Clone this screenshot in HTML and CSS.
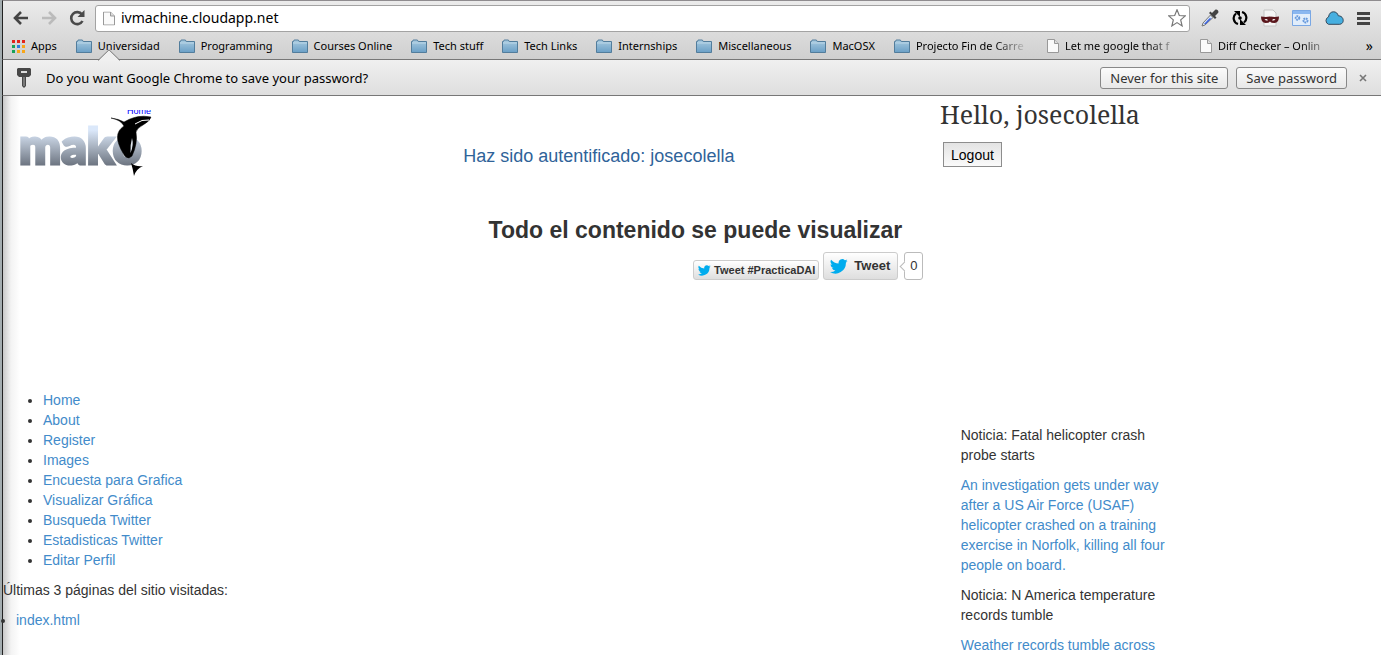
FILE: index.html
```html
<!DOCTYPE html>
<html lang="es">
<head>
<meta charset="utf-8">
<title>ivmachine.cloudapp.net</title>
<link rel="stylesheet" href="styles.css">
</head>
<body>
<svg class="defs" aria-hidden="true">
  <defs>
    <linearGradient id="folderFill" x1="0" y1="0" x2="0" y2="1"><stop offset="0" stop-color="#a9cbe0"/><stop offset="1" stop-color="#6a9fc6"/></linearGradient>
    <linearGradient id="makoFill" x1="0" y1="20" x2="0" y2="56" gradientUnits="userSpaceOnUse"><stop offset="0" stop-color="#dbe8fa"/><stop offset="0.45" stop-color="#aab4c2"/><stop offset="1" stop-color="#6b737f"/></linearGradient>
    <symbol id="folder" viewBox="0 0 16 15"><path d="M.5 13.500V2.500h1l.6-1.500h4.300l.8 1.500h8.300v11z" fill="url(#folderFill)" stroke="#527d9c"/><path d="M1 4h14" stroke="#c4dceb" stroke-width=".8"/></symbol>
    <symbol id="page" viewBox="0 0 12 14"><path d="M.5.500h7l4 4v9H.5z" fill="#fafafa" stroke="#999"/><path d="M7.500.500v4h4" fill="#ddd" stroke="#999"/></symbol>
    <symbol id="bird" viewBox="0 0 24 20"><path d="M23.600 2.400a9.700 9.700 0 0 1-2.800.8A4.900 4.900 0 0 0 22.900.500a9.700 9.700 0 0 1-3.100 1.200 4.900 4.900 0 0 0-8.300 4.400A13.800 13.800 0 0 1 1.500 1a4.900 4.900 0 0 0 1.500 6.500 4.900 4.900 0 0 1-2.200-.6 4.900 4.900 0 0 0 3.900 4.800 4.900 4.900 0 0 1-2.200.1 4.900 4.900 0 0 0 4.600 3.400A9.800 9.800 0 0 1 0 17.300 13.900 13.900 0 0 0 21.200 5z" fill="#00acee"/></symbol>
  </defs>
</svg>
<div class="window">
  <header class="chrome">
    <div class="toolbar">
      <button class="nav-btn" aria-label="Back"><svg width="16" height="14" viewBox="0 0 16 14"><path d="M15 7H2M8 1L2 7l6 6" fill="none" stroke="#444" stroke-width="2.600"/></svg></button>
      <button class="nav-btn" aria-label="Forward"><svg width="16" height="14" viewBox="0 0 16 14"><path d="M1 7h13M8 1l6 6-6 6" fill="none" stroke="#bbb" stroke-width="2.600"/></svg></button>
      <button class="nav-btn reload" aria-label="Reload"><svg width="16" height="16" viewBox="0 0 16 16"><path d="M13 4.500A6 6 0 1 0 13.500 11" fill="none" stroke="#4a4a4a" stroke-width="2.600"/><path d="M15.500 0v7H8.500z" fill="#4a4a4a"/></svg></button>
      <div class="omnibox">
        <svg width="12" height="15" viewBox="0 0 12 14"><use href="#page"/></svg>
        <input class="url" type="text" aria-label="Address" value="ivmachine.cloudapp.net">
        <svg width="18" height="18" viewBox="0 0 18 18"><path d="M9 .8l2.300 5.700 6 .4-4.600 4 1.400 6L9 13.600l-5.100 3.300 1.400-6L.7 6.900l6-.4z" fill="#fff" stroke="#777" stroke-width="1.200"/></svg>
      </div>
      <div class="extensions">
        <svg width="18" height="18" viewBox="0 0 18 18"><path d="M1 17l1-3 7.500-8 2.500 2.500L4 16z" fill="#d6e2f5" stroke="#777"/><path d="M3 15l5.500-5.700 2 .3L5 15z" fill="#3c62e0"/><path d="M8 4l6 6 1.500-1.500-1.500-1.500 3-3c1.500-1.500-1-4.500-3-3l-3 3-1.500-1.500z" fill="#444"/></svg>
        <svg width="16" height="16" viewBox="0 0 16 16"><path d="M6 14A6 6 0 0 1 4 3.500M10 2a6 6 0 0 1 2 10.500" fill="none" stroke="#000" stroke-width="2.200"/><path d="M2 1h6v6zM14 15H8V9z"/><circle cx="8" cy="8" r="1.800"/></svg>
        <svg width="18" height="18" viewBox="0 0 18 18"><path d="M3 1h9l3 3v13H3z" fill="#f5f5f5" stroke="#c5c5c5"/><path d="M0 7.500q5 .8 9 0 5 .8 9 0 0 6.500-4.500 6.500Q10 14 9 12.500 8 14 4.500 14 0 14 0 7.500z" fill="#5a161c"/><path d="M3.500 10.500q2-1.500 3.500.7-2 .8-3.500-.7zm11 0q-2-1.500-3.500.7 2 .8 3.500-.7z" fill="#fff"/></svg>
        <svg width="19" height="16" viewBox="0 0 19 16"><path d="M.5.500h18v15H.5z" fill="#e1edfb" stroke="#79a7e4"/><path d="M1 1h17v3H1z" fill="#8ab7f0"/><g fill="none" stroke="#6699dc" stroke-width="2" stroke-dasharray="1.600 .6"><circle cx="5.500" cy="8" r="1.800"/><circle cx="13.500" cy="10.500" r="2"/></g></svg>
        <svg width="20" height="14" viewBox="0 0 20 14"><path d="M4.500 13.300a3.900 3.900 0 0 1 0-7.300C5 2.500 7 .8 9.500.8c2.500 0 4.200 1.600 4.800 4 6 0 6.500 8 1.500 8.500z" fill="#46afe0" stroke="#34485a"/></svg>
        <svg width="14" height="14" viewBox="0 0 14 14"><path d="M0 2.500h13M0 7.500h13M0 12.500h13" stroke="#444" stroke-width="3"/></svg>
      </div>
    </div>
    <nav class="bookmarks" aria-label="Bookmarks">
      <a href="#" class="bm"><svg width="13" height="13" viewBox="0 0 13 13"><g fill="#e2231a"><path d="M0 0h3v3H0zM5 0h3v3H5zM10 0h3v3h-3z"/></g><path d="M0 5h3v3H0zM0 10h3v3H0z" fill="#17a258"/><path d="M5 5h3v3H5z" fill="#2a7de1"/><path d="M10 5h3v3h-3zM5 10h3v3H5zM10 10h3v3h-3z" fill="#f8a617"/></svg>Apps</a>
      <a href="#" class="bm"><svg width="16" height="15"><use href="#folder"/></svg>Universidad</a>
      <a href="#" class="bm"><svg width="16" height="15"><use href="#folder"/></svg>Programming</a>
      <a href="#" class="bm"><svg width="16" height="15"><use href="#folder"/></svg>Courses Online</a>
      <a href="#" class="bm"><svg width="16" height="15"><use href="#folder"/></svg>Tech stuff</a>
      <a href="#" class="bm"><svg width="16" height="15"><use href="#folder"/></svg>Tech Links</a>
      <a href="#" class="bm"><svg width="16" height="15"><use href="#folder"/></svg>Internships</a>
      <a href="#" class="bm"><svg width="16" height="15"><use href="#folder"/></svg>Miscellaneous</a>
      <a href="#" class="bm"><svg width="16" height="15"><use href="#folder"/></svg>MacOSX</a>
      <a href="#" class="bm long"><svg width="16" height="15"><use href="#folder"/></svg>Projecto Fin de Carre</a>
      <a href="#" class="bm long"><svg width="12" height="14"><use href="#page"/></svg>Let me google that f</a>
      <a href="#" class="bm long"><svg width="12" height="14"><use href="#page"/></svg>Diff Checker – Onlin</a>
      <button class="more" aria-label="More bookmarks">»</button>
    </nav>
  </header>
  <div class="infobar">
    <svg class="notch" width="22" height="12" viewBox="0 0 22 12"><path d="M0 12L11 1l11 11z" fill="#f0f0f0"/><path d="M0 11.500L11 .8l11 10.700" fill="none" stroke="#777"/></svg>
    <svg width="14" height="20" viewBox="0 0 14 20"><path d="M1 0h12l1 1v6l-2 2H9v9l-2 2-2-2V9H2L0 7V1z" fill="#484848"/><path d="M4 3h6v2H4z" fill="#ddd"/><path d="M7 9v9" stroke="#aaa"/></svg>
    <p class="question">Do you want Google Chrome to save your password?</p>
    <button class="info-btn">Never for this site</button>
    <button class="info-btn">Save password</button>
    <button class="close" aria-label="Close"><svg width="8" height="8" viewBox="0 0 8 8"><path d="M1 1l6 6M7 1L1 7" stroke="#777" stroke-width="1.600"/></svg></button>
  </div>
  <main class="page">
    <section class="top">
      <a class="logo" href="#" aria-label="Mako">
        <svg width="140" height="72" viewBox="0 0 140 72">
          <svg x="106" y="0" width="30" height="5"><text x="1" y="4" class="logo-home">Home</text></svg>
          <text x="-1" y="54" class="logo-word">mako</text>
          <path d="M91 8q8 1 13 4 13-8 27-5-1 4-8 8-6 3-7 7 2 11-4 24l-3 2q-4 0-6-5c-7-12-8-21 1-27q-3-6-13-8z" stroke="#000" stroke-width=".5"/><path d="M110.500 43q-.5-8 1.500-15 2 7-1.500 15z" fill="#dfe6ee"/><path d="M115 14q7-5 14-4" fill="none" stroke="#fff" stroke-width="1"/><path d="M111 53q5 4 12 3-7 3-9 10-1-7-3-13z"/>
        </svg>
      </a>
      <p class="auth">Haz sido autentificado: josecolella</p>
      <div class="user">
        <h1 class="hello">Hello, josecolella</h1>
        <button class="logout">Logout</button>
      </div>
    </section>
    <section class="hero">
      <h2 class="title">Todo el contenido se puede visualizar</h2>
      <div class="tweets">
        <a class="tweet small" href="#"><svg width="13" height="11"><use href="#bird"/></svg>Tweet #PracticaDAI</a>
        <a class="tweet large" href="#"><svg width="18" height="15"><use href="#bird"/></svg>Tweet</a>
        <a class="count" href="#">0</a>
      </div>
    </section>
    <section class="columns">
      <div class="side">
        <ul class="menu">
          <li><a href="#">Home</a></li>
          <li><a href="#">About</a></li>
          <li><a href="#">Register</a></li>
          <li><a href="#">Images</a></li>
          <li><a href="#">Encuesta para Grafica</a></li>
          <li><a href="#">Visualizar Gráfica</a></li>
          <li><a href="#">Busqueda Twitter</a></li>
          <li><a href="#">Estadisticas Twitter</a></li>
          <li><a href="#">Editar Perfil</a></li>
        </ul>
        <p>Últimas 3 páginas del sitio visitadas:</p>
        <ul class="visited"><li><a href="#">index.html</a></li></ul>
      </div>
      <aside class="news">
        <p>Noticia: Fatal helicopter crash probe starts</p>
        <p><a href="#">An investigation gets under way after a US Air Force (USAF) helicopter crashed on a training exercise in Norfolk, killing all four people on board.</a></p>
        <p>Noticia: N America temperature records tumble</p>
        <p><a href="#">Weather records tumble across</a></p>
      </aside>
    </section>
  </main>
</div>
</body>
</html>
```
FILE: styles.css
```css
* { box-sizing: border-box; }
body {
  margin: 0;
  height: 100vh;
  overflow: hidden;
  background: #fff;
  color: #333;
  font: 14px/20px "Liberation Sans", Arial, sans-serif;
}
.defs { position: absolute; width: 0; height: 0; }
a { color: #428bca; text-decoration: none; }
p { margin: 0 0 10px; }
button { font: inherit; padding: 0; border: 0; background: none; color: inherit; }
svg { display: block; flex: none; }

.window {
  min-height: 100vh;
  border-left: 2px solid #a4adb0;
}
.chrome, .infobar, .page { border-left: 1px solid #222; }

.chrome {
  height: 60px;
  border-top: 1px solid #8f8c8f;
  border-bottom: 1px solid #777;
  background: linear-gradient(#ebebeb, #cfcfcf);
  font: 11px/16px "Noto Sans", sans-serif;
  color: #000;
}
.toolbar { display: flex; align-items: center; height: 34px; padding: 0 10px; }
.nav-btn { width: 28px; display: flex; }
.reload { width: 26px; }
.omnibox {
  flex: 1;
  display: flex;
  align-items: center;
  height: 27px;
  padding: 0 3px 0 7px;
  border: 1px solid #a3a3a3;
  border-radius: 3px;
  background: #fff;
}
.url {
  flex: 1;
  min-width: 0;
  padding: 0 0 0 6px;
  border: 0;
  outline: 0;
  background: none;
  font: 14px/20px "Noto Sans", sans-serif;
  color: #000;
}
.extensions { display: flex; align-items: center; gap: 13px; padding-left: 11px; }

.bookmarks { display: flex; align-items: center; height: 22px; padding: 0 8px 0 9px; }
.bm {
  display: flex;
  align-items: center;
  gap: 6px;
  margin-right: 19px;
  color: #000;
  white-space: nowrap;
}
.long {
  width: 134px;
  -webkit-mask-image: linear-gradient(90deg, #000 75%, transparent);
  mask-image: linear-gradient(90deg, #000 75%, transparent);
}
.more { margin-left: auto; font-size: 14px; }

.infobar {
  position: relative;
  display: flex;
  align-items: center;
  height: 36px;
  padding: 0 14px;
  border-bottom: 1px solid #777;
  background: linear-gradient(#f0f0f0, #dedede);
  font: 13px/18px "Noto Sans", sans-serif;
  color: #000;
}
.notch { position: absolute; left: 95px; top: -11px; }
.question { flex: 1; margin: 0 0 0 15px; }
.info-btn {
  height: 22px;
  margin-left: 8px;
  padding: 0 9px;
  border: 1px solid #888;
  border-radius: 3px;
  background: linear-gradient(#fbfbfb, #e8e8e8);
  color: #333;
}
.close { margin-left: 12px; }

.page { background: linear-gradient(90deg, #c9c9c9, #f3f3f3 8px, #fff 17px); min-height: calc(100vh - 96px); }
.top { display: flex; height: 106px; }
.logo { width: 33.400%; padding: 14px 0 0 17px; }
.logo-home { font: 9px "Liberation Sans", sans-serif; fill: #00f; }
.logo-word { font: 900 50px Lato, sans-serif; fill: url(#makoFill); stroke: url(#makoFill); stroke-width: 3px; }
.auth { width: 34.600%; margin: 0; padding-top: 50px; font-size: 18px; color: #2f6399; }
.hello {
  margin: 0;
  font: 25px/36px "Noto Serif", "Liberation Serif", serif;
}
.logout {
  display: block;
  height: 25px;
  margin: 10px 0 0 3px;
  padding: 0 7px;
  border: 1px solid #8d8d8d;
  background: linear-gradient(#e3e3e3, #fafafa);
  color: #000;
}
.hero { width: 67%; padding: 15px 3px 0 0; }
.title { margin: 0; text-align: right; padding-right: 21px; font: bold 23px/26px "Liberation Sans", sans-serif; }
.tweets { display: flex; justify-content: flex-end; align-items: flex-end; gap: 4px; margin-top: 9px; }
.tweet {
  display: flex;
  align-items: center;
  border: 1px solid #ccc;
  border-radius: 3px;
  background: linear-gradient(#fff, #dedede);
  color: #333;
  font-weight: bold;
}
.small { height: 20px; gap: 3px; padding: 0 3px 0 4px; font-size: 11px; }
.large { height: 28px; gap: 6px; padding: 0 7px 0 6px; font-size: 13px; }
.count {
  position: relative;
  width: 19px;
  height: 28px;
  margin-left: 2px;
  border: 1px solid #bbb;
  border-radius: 3px;
  background: #fff;
  color: #333;
  text-align: center;
  font-size: 13px;
  line-height: 26px;
}
.count::before {
  content: "";
  position: absolute;
  left: -4px;
  top: 10px;
  width: 6px;
  height: 6px;
  border: solid #bbb;
  border-width: 0 0 1px 1px;
  background: #fff;
  transform: rotate(45deg);
}
.columns { display: flex; padding-top: 110px; }
.side { width: 69.500%; }
.menu { margin: 0 0 10px; padding-left: 40px; }
.visited { margin: 0; padding-left: 13px; }
.news { width: 220px; padding-top: 35px; }
```
